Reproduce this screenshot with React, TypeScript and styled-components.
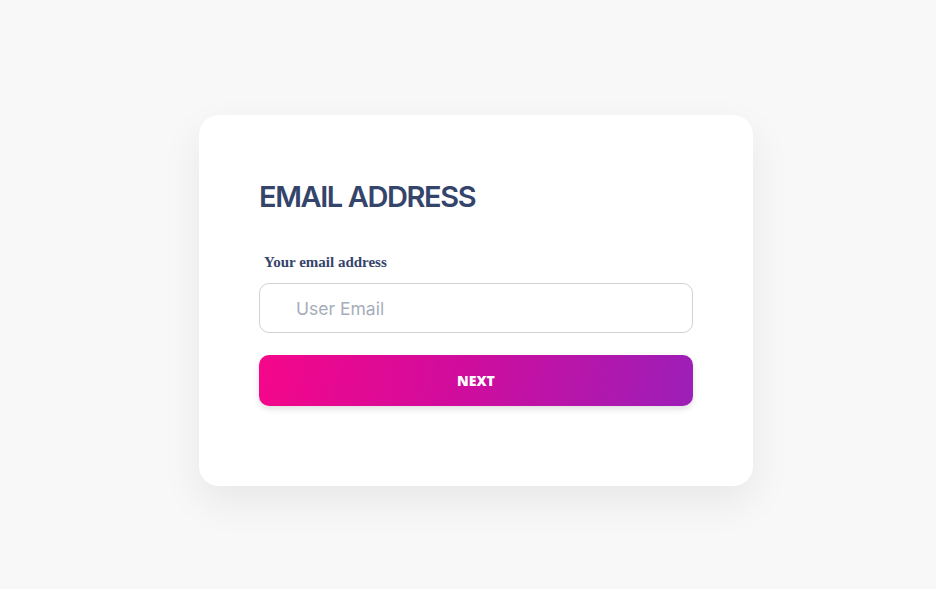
import React from "react";
import styled, { createGlobalStyle } from "styled-components";

const GlobalStyle = createGlobalStyle`
  html, body { margin: 0; padding: 0; background: #f8f8f8; }
  * { box-sizing: border-box; }
`;

const Page = styled.div`
  min-height: 100vh;
  display: flex;
  align-items: center;
  justify-content: center;
  padding: 12px 0 0 16px;
`;

const Card = styled.form`
  width: 554px;
  height: 371px;
  background: #ffffff;
  border-radius: 20px;
  box-shadow: 0 16px 40px rgba(0, 0, 0, 0.07);
  padding: 62px 60px 0 60px;
  display: flex;
  flex-direction: column;
`;

const Title = styled.h1`
  margin: 0;
  font-family: Inter, "Noto Sans", sans-serif;
  font-weight: 600;
  font-size: 29px;
  line-height: 40px;
  letter-spacing: -1.4px;
  color: #34446a;
`;

const Label = styled.label`
  margin: 36px 0 0 5px;
  font-family: "Liberation Serif", serif;
  font-weight: 700;
  font-size: 15px;
  line-height: 18px;
  color: #34446a;
`;

const Input = styled.input`
  margin-top: 12px;
  width: 100%;
  height: 50px;
  border: 1px solid #cfd1d6;
  border-radius: 10px;
  padding: 0 0 0 36px;
  font-family: Inter, "Noto Sans", sans-serif;
  font-size: 17.5px;
  color: #34446a;
  outline: none;
  &::placeholder { color: #a6adba; }
`;

const Button = styled.button`
  margin-top: 22px;
  width: 100%;
  height: 51px;
  border: none;
  border-radius: 10px;
  background: linear-gradient(100deg, #f5078a 0%, #d10c9c 45%, #9c1fb8 100%);
  box-shadow: 0 3px 6px rgba(0, 0, 0, 0.12);
  color: #ffffff;
  font-family: "Open Sans", sans-serif;
  font-weight: 800;
  font-size: 14px;
  letter-spacing: 0;
  cursor: pointer;
`;

export default function App() {
  return (
    <>
      <GlobalStyle />
      <Page>
        <Card onSubmit={(e) => e.preventDefault()}>
          <Title>EMAIL ADDRESS</Title>
          <Label htmlFor="email">Your email address</Label>
          <Input id="email" type="email" placeholder="User Email" />
          <Button type="submit">NEXT</Button>
        </Card>
      </Page>
    </>
  );
}
